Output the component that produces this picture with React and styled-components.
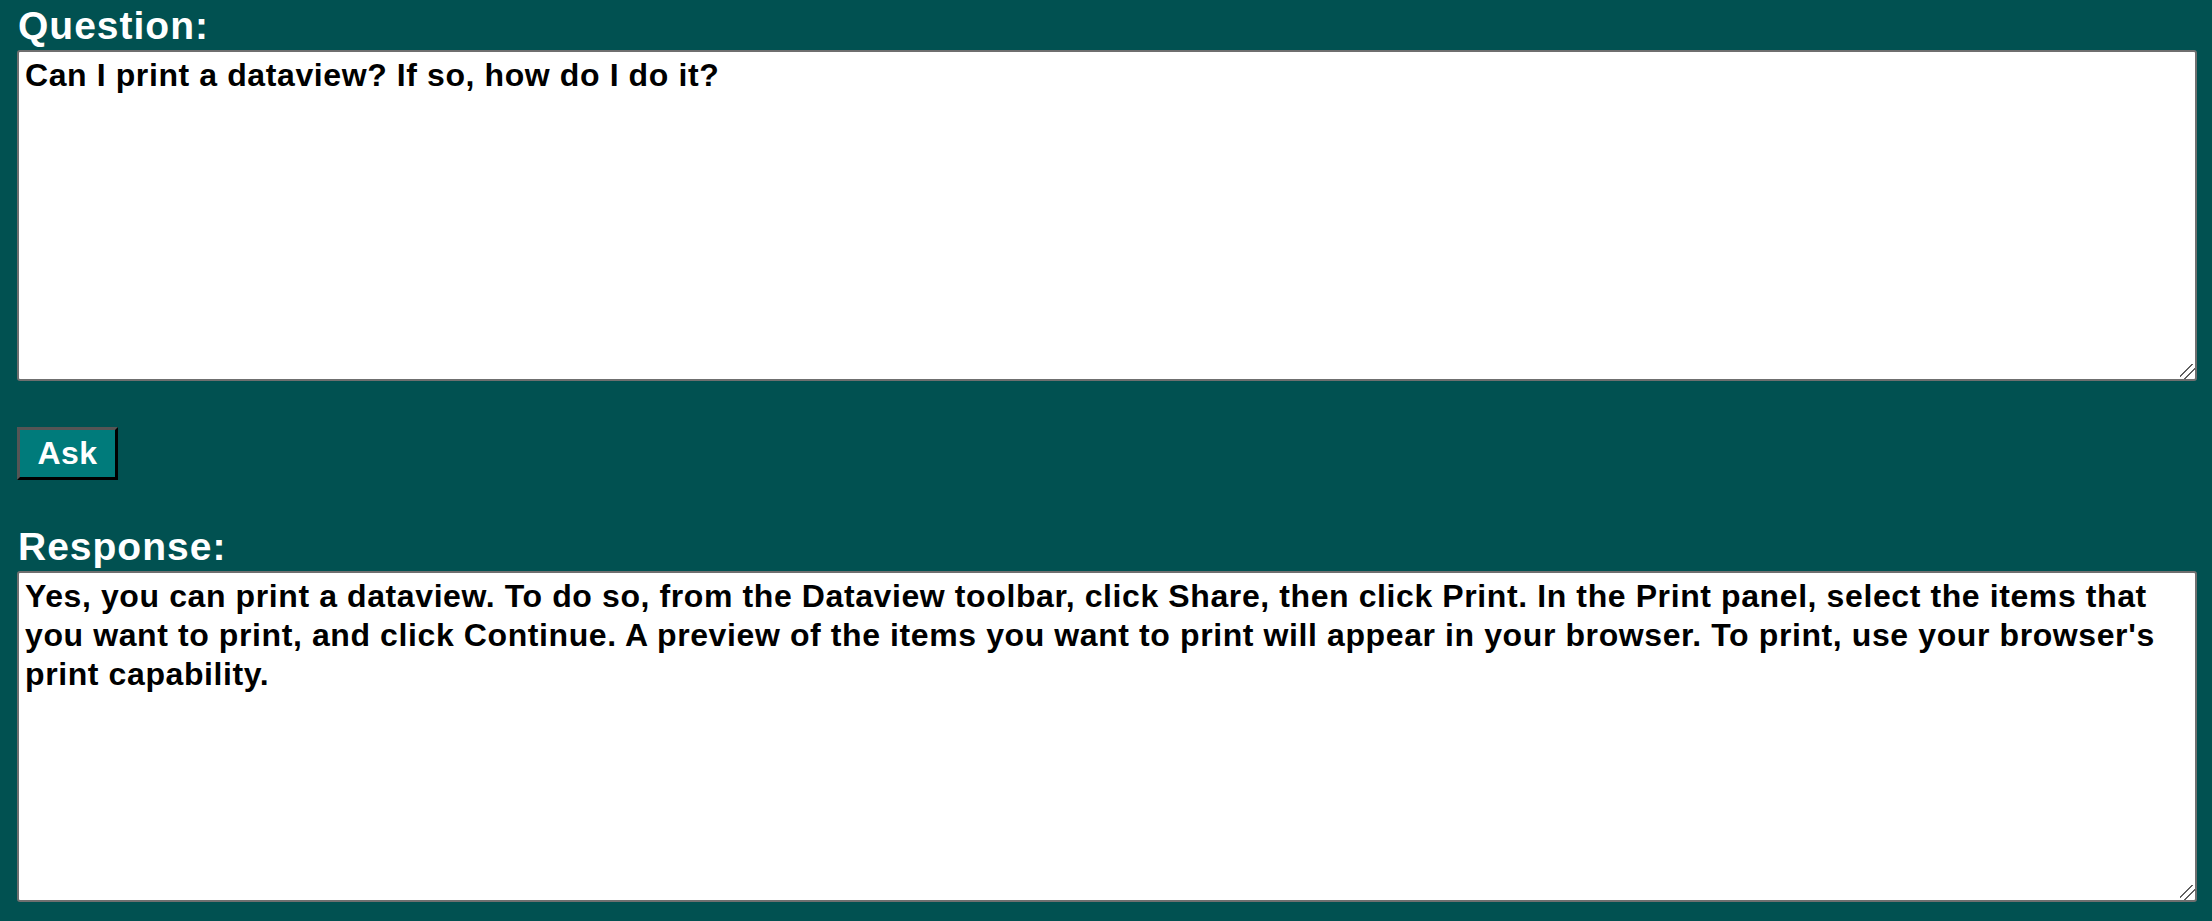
import React from 'react';
import styled, { createGlobalStyle } from 'styled-components';

const question = 'Can I print a dataview? If so, how do I do it?';
const response =
  "Yes, you can print a dataview. To do so, from the Dataview toolbar, click Share, then click Print. In the Print panel, select the items that you want to print, and click Continue. A preview of the items you want to print will appear in your browser. To print, use your browser's print capability.";

const App = () => {
  return (
    <>
      <GlobalStyle />
      <Page>
        <Label htmlFor="question">Question:</Label>
        <TextBox id="question" defaultValue={question} spellCheck />
        <AskButton type="button">Ask</AskButton>
        <Label htmlFor="response">Response:</Label>
        <TextBox id="response" defaultValue={response} readOnly />
      </Page>
    </>
  );
};

export default App;

// Styled Components
const GlobalStyle = createGlobalStyle`
  html, body {
    margin: 0;
    padding: 0;
    background: #015151;
  }
`;

const Page = styled.main`
  display: flex;
  flex-direction: column;
  align-items: flex-start;
  padding: 5px 15px 0 17px;
  min-height: 921px;
  box-sizing: border-box;
  background: #015151;
  font-family: "Liberation Sans", Arial, sans-serif;
`;

const Label = styled.label`
  display: block;
  margin: 0 0 4px 1px;
  font-size: 39px;
  line-height: 41px;
  font-weight: bold;
  letter-spacing: 1px;
  color: #ffffff;
`;

const TextBox = styled.textarea`
  display: block;
  box-sizing: border-box;
  width: 100%;
  height: 331px;
  margin: 0;
  padding: 4px 6px;
  border: 2px solid #6f6f6f;
  border-radius: 3px;
  background: #ffffff;
  color: #000000;
  font-family: "Liberation Sans", Arial, sans-serif;
  font-size: 32px;
  line-height: 39px;
  font-weight: bold;
  letter-spacing: 0.6px;
  resize: both;
  outline: none;

  &::-webkit-scrollbar {
    width: 20px;
    height: 20px;
  }

  &::-webkit-resizer {
    background: linear-gradient(
      135deg,
      transparent 0 39%,
      #5f5f5f 39% 46%,
      transparent 46% 62%,
      #5f5f5f 62% 69%,
      transparent 69%
    );
  }
`;

const AskButton = styled.button`
  margin: 46px 0 46px 0;
  width: 101px;
  height: 53px;
  padding: 0;
  border: 3px solid;
  border-color: #555555 #000000 #000000 #555555;
  background: #007b7b;
  color: #ffffff;
  font-family: "Liberation Sans", Arial, sans-serif;
  font-size: 32px;
  font-weight: bold;
  letter-spacing: 0.5px;
  cursor: pointer;
`;
